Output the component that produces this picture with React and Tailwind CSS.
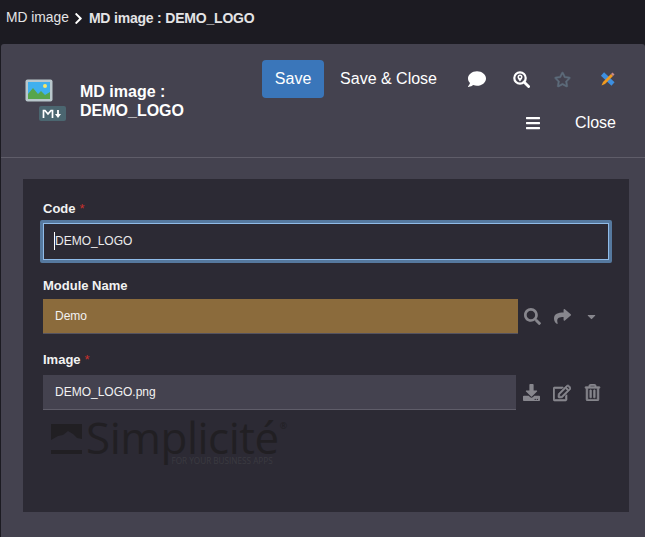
import { FaComment, FaRegStar, FaBars, FaSearch, FaShare, FaCaretDown, FaDownload, FaRegEdit, FaRegTrashAlt, FaChevronRight } from 'react-icons/fa';

const sans = "font-['Liberation_Sans',Arial,sans-serif]";

const ObjectIcon = () => (
  <div className="relative w-[42px] h-[44px] shrink-0">
    <svg width="28" height="23" viewBox="0 0 28 23" className="absolute left-0 top-0">
      <rect x="0.5" y="0.5" width="27" height="22" rx="2" fill="#b9c7cc" />
      <rect x="3" y="3" width="22" height="17" fill="#3fb0ee" />
      <circle cx="20" cy="7" r="2" fill="#f5e66b" />
      <path d="M3 20v-5l5-6 5 6 3-3 4 4 5-3v7z" fill="#57a54b" />
    </svg>
    <div className="absolute left-[14px] top-[27px] w-[27px] h-[15px] rounded-[2px] bg-[#4b6670] flex items-center justify-center">
      <svg width="21" height="10" viewBox="0 0 21 10">
        <path d="M1.500 9V1.500h1.500L6 5l3-3.500h1.500V9" fill="none" stroke="#fff" strokeWidth="1.700" />
        <path d="M16 1v4" fill="none" stroke="#fff" strokeWidth="1.800" />
        <path d="M13 5h6l-3 4z" fill="#fff" />
      </svg>
    </div>
  </div>
);

const PinSearchIcon = () => (
  <svg width="17" height="17" viewBox="0 0 17 17">
    <circle cx="7" cy="7" r="5.700" fill="none" stroke="#fff" strokeWidth="2.200" />
    <path d="M11 11l4.600 4.600" stroke="#fff" strokeWidth="2.800" strokeLinecap="round" />
    <path d="M7 3.600a2.500 2.500 0 0 1 2.500 2.500C9.500 8 7 10.400 7 10.400S4.500 8 4.500 6.100A2.500 2.500 0 0 1 7 3.600z" fill="#fff" />
    <circle cx="7" cy="6" r="1" fill="#44424f" />
  </svg>
);

const ToolsIcon = () => (
  <svg width="16" height="16" viewBox="0 0 16 16">
    <path d="M2.500 3l10.500 10" stroke="#3d8fe0" strokeWidth="4.500" />
    <path d="M1.500 14.500l1.500-3.500 8-8 2 2-8 8z" fill="#f09a1f" />
    <path d="M11 3l1.500-1.500 2 2L13 5z" fill="#c98a8a" />
  </svg>
);

const Label = ({ children, required }) => (
  <div className="text-[13px] leading-[15px] font-bold text-[#f2f2f2]">
    {children}
    {required && <span className="ml-[4px] font-normal text-[#c9302c]">*</span>}
  </div>
);

const SimpliciteLogo = () => (
  <div className="mt-[10px] ml-[8px] flex items-start text-[#211f23] font-['Open_Sans',sans-serif]">
    <svg width="31" height="30" viewBox="0 0 31 30" className="mt-[4px] shrink-0">
      <path d="M0 0h31v15l-5-1-4-4-5-3-5 4-5 1-7 4z" fill="#211f23" />
      <path d="M0 26h31v4H0z" fill="#211f23" />
    </svg>
    <div className="ml-[4px] flex flex-col items-end">
      <div className="text-[44px] leading-[34px] tracking-[-0.5px] whitespace-nowrap">Simplicité</div>
      <div className="mt-[2px] mr-[6px] text-[8.2px] leading-[10px] whitespace-nowrap text-[#3b3a41]">FOR YOUR BUSINESS APPS</div>
    </div>
    <div className="ml-[1px] mt-[1px] text-[9px] leading-[10px]">®</div>
  </div>
);

export default function App() {
  return (
    <div className={`h-screen overflow-hidden bg-[#1c1b22] ${sans}`}>
      {/* Breadcrumb */}
      <div className="h-[44px] pl-[6px] pt-[10px] flex items-start text-[14px] leading-[16px] text-[#e4e4e6]">
        <span className="text-[13.8px]">MD image</span>
        <FaChevronRight className="ml-[3px] mt-[2px] text-[13px] text-white" />
        <span className="ml-[4px] font-bold tracking-[-0.2px]">MD image : DEMO_LOGO</span>
      </div>

      <div className="ml-[1px] h-[493px] rounded-t-[3px] bg-[#44424f]">
        {/* Header */}
        <div className="h-[114px] flex justify-between border-b border-[#5f5d69]">
          <div className="pl-[24px] pt-[35px] flex items-start">
            <ObjectIcon />
            <div className="ml-[13px] mt-[3px] text-[16px] leading-[19px] font-bold text-white">
              MD image :<br />DEMO_LOGO
            </div>
          </div>

          <div className="pt-[16px] pr-[26px] flex flex-col items-end">
            <div className="flex items-center h-[38px] text-[16px] text-white">
              <button className="w-[62px] h-[38px] rounded-[4px] bg-[#3a76ba]">Save</button>
              <span className="ml-[16px]">Save &amp; Close</span>
              <FaComment className="ml-[31px] text-[18px]" />
              <div className="ml-[27px]"><PinSearchIcon /></div>
              <FaRegStar className="ml-[24px] text-[17px] text-[#5d6b7a] stroke-current stroke-[16px]" />
              <div className="ml-[29px] mr-[3px]"><ToolsIcon /></div>
            </div>
            <div className="mt-[7px] flex items-center h-[36px] text-[16px] text-white">
              <FaBars className="text-[16px]" />
              <span className="ml-[34px] mr-[3px]">Close</span>
            </div>
          </div>
        </div>

        {/* Form panel */}
        <div className="ml-[22px] mt-[21px] w-[606px] h-[333px] bg-[#2c2a34] px-[20px] pt-[22px]">
          <Label required>Code</Label>
          <div className="-ml-[3px] mt-[4px] w-[572px] h-[43px] rounded-[2px] border-[3px] border-[#56799f] bg-[#2c2a34]">
            <div className="h-full border border-[#8fbbe8] pl-[10px] pb-[1px] flex items-center text-[12px] text-[#ececec]">
              <span className="border-l border-white">DEMO_LOGO</span>
            </div>
          </div>

          <div className="mt-[15px]"><Label>Module Name</Label></div>
          <div className="mt-[6px] flex items-center">
            <div className="w-[475px] h-[35px] pl-[12px] flex items-center bg-[#8b6b3c] border-b border-[#55535f] text-[12px] text-[#f2f2f2]">Demo</div>
            <FaSearch className="ml-[6px] text-[17px] text-[#87868d]" />
            <FaShare className="ml-[13px] text-[17px] text-[#87868d]" />
            <FaCaretDown className="ml-[14px] text-[13px] text-[#87868d]" />
          </div>

          <div className="mt-[18px]"><Label required>Image</Label></div>
          <div className="mt-[8px] flex items-center">
            <div className="w-[473px] h-[35px] pl-[12px] flex items-center bg-[#44424f] border-b border-[#5f5d69] text-[12px] text-[#f2f2f2]">DEMO_LOGO.png</div>
            <FaDownload className="ml-[7px] text-[17px] text-[#87868d]" />
            <FaRegEdit className="ml-[13px] text-[18px] text-[#87868d] stroke-current stroke-[20px]" />
            <FaRegTrashAlt className="ml-[13px] text-[17px] text-[#87868d] stroke-current stroke-[20px]" />
          </div>

          <SimpliciteLogo />
        </div>
      </div>
    </div>
  );
}
